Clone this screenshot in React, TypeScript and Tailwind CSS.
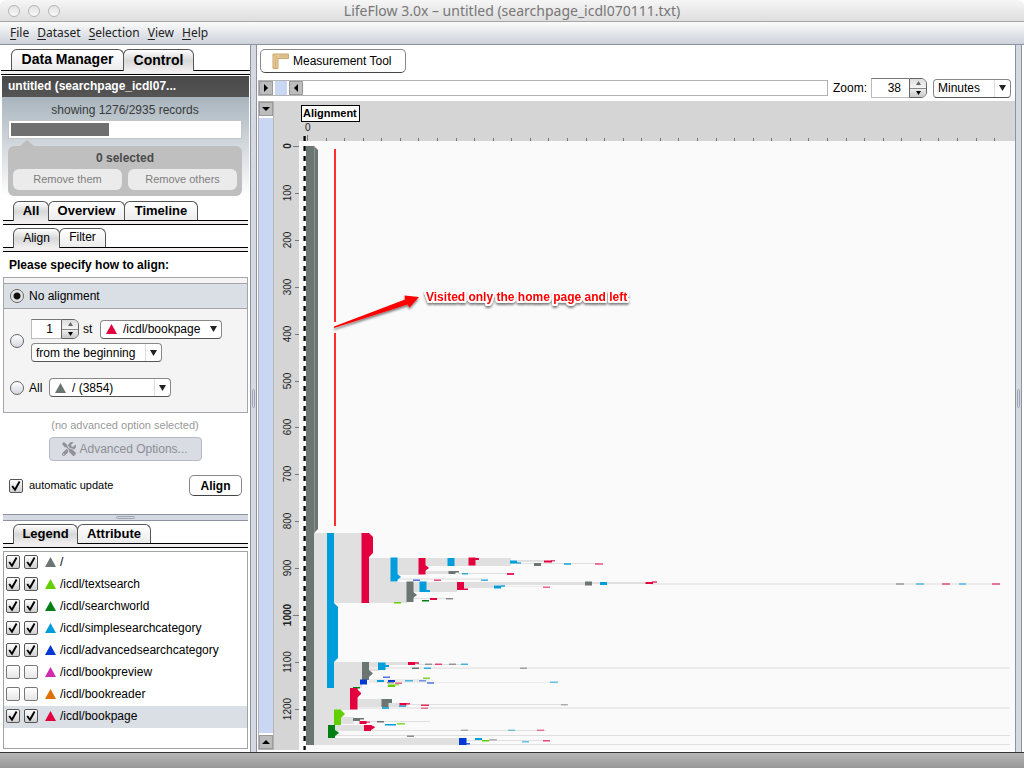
import React, { useState } from "react";
import { FaTools } from "react-icons/fa";

const GRAY = "#6b7572";
const BLUE = "#009ddc";
const RED = "#e2003f";
const NAVY = "#0039d6";
const LIME = "#63cf00";
const GREEN = "#007f14";
const LIGHT = "#e0e0e0";
const FAINT = "#ebebeb";

type Bar = [x: number, y: number, w: number, h: number, color: string, opacity?: number];

/* Light connectors drawn under the event bars. */
const links: Bar[] = [
  [314, 533, 13, 212, LIGHT],
  [334, 533, 28, 70, LIGHT],
  [369, 558, 22, 24, LIGHT],
  [369, 582, 38, 21, LIGHT],
  [397, 558, 22, 17, LIGHT],
  [397, 578, 91, 2, FAINT],
  [425, 558, 86, 8, LIGHT],
  [425, 571, 24, 3, LIGHT],
  [458, 573, 49, 1, LIGHT],
  [475, 560, 35, 6, LIGHT],
  [517, 560, 27, 2, LIGHT],
  [510, 563, 90, 1, LIGHT],
  [413, 582, 44, 10, LIGHT],
  [464, 582, 121, 3, LIGHT],
  [592, 582, 54, 2, LIGHT],
  [464, 585, 30, 3, LIGHT],
  [502, 586, 42, 1, FAINT],
  [650, 583, 350, 2, FAINT],
  [413, 598, 38, 1, LIGHT],
  [334, 662, 28, 26, LIGHT],
  [369, 662, 10, 9, LIGHT],
  [385, 662, 24, 3, LIGHT],
  [415, 664, 52, 1, LIGHT],
  [369, 667, 641, 2, FAINT],
  [369, 679, 60, 3, FAINT],
  [369, 682, 182, 1, FAINT],
  [314, 688, 36, 22, LIGHT],
  [357, 699, 25, 9, LIGHT],
  [388, 703, 12, 4, LIGHT],
  [407, 704, 160, 1, LIGHT],
  [357, 707, 653, 2, FAINT],
  [314, 710, 20, 15, LIGHT],
  [341, 717, 13, 7, LIGHT],
  [360, 721, 70, 1, LIGHT],
  [314, 725, 14, 13, LIGHT],
  [335, 725, 30, 6, LIGHT],
  [371, 730, 175, 1, LIGHT],
  [335, 735, 675, 1, LIGHT],
  [314, 738, 146, 7, LIGHT],
  [466, 740, 80, 1, LIGHT],
  [466, 744, 544, 1, LIGHT],
];

const bars: Bar[] = [
  [306, 146, 8, 599, GRAY],
  [327, 533, 7, 155, BLUE],
  [361.5, 533, 7.5, 70, RED],
  [390.5, 557.5, 7, 24, BLUE],
  [418.5, 558, 7, 16.5, RED],
  [447.5, 558, 7, 8, BLUE],
  [468.5, 557.5, 7, 8, RED],
  [475, 558, 4, 2, RED],
  [448.5, 571, 7, 3, GRAY],
  [455, 571, 4, 1.5, GRAY],
  [462, 573, 6, 1.5, BLUE, 0.8],
  [510, 560.5, 7, 3, BLUE],
  [517, 562, 4, 2, BLUE, 0.6],
  [544, 560.5, 8, 2, RED],
  [551, 560, 4, 1.5, RED, 0.7],
  [534, 563, 7, 3, GRAY],
  [564, 563, 7, 2, BLUE, 0.7],
  [595, 563, 8, 2, RED, 0.5],
  [507, 573, 7, 2, RED, 0.85],
  [413, 579.5, 7, 1.5, NAVY, 0.7],
  [434, 579.5, 7, 1.5, RED, 0.7],
  [481, 579.5, 7, 1.5, BLUE, 0.75],
  [406.5, 581.5, 7, 20.5, GRAY],
  [419.5, 581.5, 7, 10.5, BLUE],
  [426, 590, 4, 2, BLUE],
  [457, 582, 7, 8, RED],
  [464, 588.5, 4, 1.5, RED],
  [585, 581.5, 7, 4, GRAY],
  [600, 582, 7, 3, BLUE],
  [645.5, 582, 7.5, 2, RED],
  [652, 581, 5, 2, RED, 0.6],
  [494, 585.5, 7, 3, BLUE],
  [501, 585, 4, 2, BLUE, 0.7],
  [543, 586.5, 7, 1.5, RED, 0.6],
  [394, 602, 7, 1.5, LIME],
  [422, 600, 7, 1.5, GREEN],
  [430, 598, 7, 2, RED],
  [446, 598, 7, 1.5, GRAY, 0.8],
  [896, 583, 8, 2, GRAY, 0.5],
  [916, 583, 8, 2, BLUE, 0.5],
  [942, 583, 8, 2, RED, 0.5],
  [959, 583, 7, 2, BLUE, 0.5],
  [992, 583, 8, 2, RED, 0.5],
  [362, 662, 7, 18, GRAY],
  [378, 662.5, 7.5, 7.5, BLUE],
  [385, 665, 4, 2, BLUE],
  [408, 662, 7, 3, RED],
  [415, 662, 4, 2, RED, 0.7],
  [425, 663.5, 7, 1.5, GRAY, 0.7],
  [435, 663.5, 7, 1.5, RED, 0.7],
  [449, 663.5, 7, 1.5, GRAY, 0.7],
  [461, 663.5, 7, 1.5, BLUE, 0.7],
  [412, 667.5, 7, 1.5, GRAY],
  [424, 667.5, 7, 1.5, BLUE, 0.8],
  [520, 667.5, 7, 1.5, GRAY, 0.6],
  [383, 676.5, 7, 1.5, NAVY, 0.7],
  [423, 677.5, 7, 1.5, LIME, 0.8],
  [360, 679.5, 7, 5, NAVY],
  [377, 680, 7, 2, BLUE],
  [388, 680, 7, 2, NAVY],
  [387, 682, 7, 1.5, GRAY, 0.7],
  [395, 682.5, 7, 1.5, RED, 0.6],
  [405, 680, 8, 1.5, BLUE, 0.7],
  [419, 680, 7, 1.5, NAVY, 0.5],
  [427, 682, 7, 2, NAVY, 0.5],
  [550, 681.5, 8, 1.5, BLUE, 0.6],
  [388, 684.5, 7, 2.5, LIME],
  [395, 684, 4, 1.5, LIME, 0.6],
  [353, 687, 7, 1.5, GREEN],
  [350, 688, 7.5, 21.5, RED],
  [381.5, 699, 7, 8, GRAY],
  [388, 699, 4, 4, GRAY],
  [399.5, 703, 7, 2.5, RED],
  [406, 703, 4, 1.5, RED, 0.8],
  [399, 705.5, 7, 1.5, BLUE, 0.8],
  [421, 704.5, 8, 1.5, RED, 0.8],
  [421, 707.5, 7, 1.5, RED, 0.5],
  [382, 707, 7, 2, BLUE, 0.8],
  [561, 704, 7, 1.5, GRAY, 0.5],
  [334, 709.5, 7, 15.5, LIME],
  [353, 718, 7, 3, GRAY],
  [359, 718, 5, 1.5, GRAY],
  [359.5, 721, 7, 3, RED],
  [366, 721.5, 4, 1.5, RED, 0.6],
  [377, 721, 7, 1.5, GRAY],
  [385, 724, 11, 1.5, BLUE],
  [397, 723, 8, 1.5, LIME, 0.8],
  [328, 725, 7, 13, GREEN],
  [364, 725, 7, 6, RED],
  [407, 735.5, 7, 1.5, GRAY, 0.8],
  [461, 729.5, 7, 1.5, GRAY, 0.5],
  [508, 729.5, 7, 1.5, BLUE, 0.5],
  [537, 729.5, 7, 1.5, RED, 0.5],
  [459, 738, 7.5, 7, NAVY],
  [466, 743, 4, 1.5, NAVY, 0.8],
  [475, 738, 7, 2, BLUE],
  [482, 740, 7, 1.5, LIME],
  [489, 739, 8, 1.5, GRAY, 0.5],
  [522, 741, 7, 1.5, BLUE, 0.6],
  [543, 740, 7, 1.5, RED, 0.7],
];

/* Chamfered tails: sequences that end at a bar. */
const tails: Bar[] = [
  [314, 146, 4, 387, GRAY],
  [369, 533, 4, 24, RED],
  [334, 603, 4, 59, BLUE],
  [397, 574, 4, 6, BLUE],
  [425, 565, 4, 6, RED],
  [413, 592, 4, 6, GRAY],
  [369, 670, 4, 7, GRAY],
  [357, 689, 4, 9, RED],
  [341, 710, 4, 8, LIME],
  [335, 730, 4, 6, GREEN],
  [371, 725, 4, 5, RED],
];

function tailPoints([x, y, w, h]: Bar) {
  const c = Math.min(4, h / 2);
  return `${x},${y} ${x + w - 1},${y + c - 1} ${x + w},${y + c} ${x + w},${y + h - c} ${x},${y + h}`;
}

function Triangle({ color }: { color: string }) {
  return (
    <svg width="11" height="10" viewBox="0 0 11 10" className="shrink-0" aria-hidden="true">
      <path d="M5.5 0 L11 10 H0 Z" fill={color} />
    </svg>
  );
}

type TabsProps = { items: string[]; selected: number; size: "lg" | "md" | "sm"; widths: string[] };

function Tabs({ items, selected, size, widths }: TabsProps) {
  const [active, setActive] = useState(selected);
  const rowHeight = { lg: "h-[21px]", md: "h-[19px]", sm: "h-[19px]" }[size];
  const text = { lg: "text-sm font-bold", md: "text-[13px] font-bold", sm: "text-xs" }[size];
  return (
    <div role="tablist" className="flex flex-col">
      <div className={`${rowHeight} flex pl-[10px]`}>
        {items.map((t, i) => (
          <button
            key={t}
            role="tab"
            aria-selected={i === active}
            onClick={() => setActive(i)}
            className={`${text} ${widths[i]} ${i ? "-ml-px" : ""} rounded-t-md border border-b-0 border-[#555] pb-0.5 leading-none ${
              i === active
                ? "relative z-10 -mb-px bg-linear-to-b from-white via-[#d8d8d8] to-[#f0eeee]"
                : "bg-linear-to-b from-white to-[#ececec]"
            }`}
          >
            {t}
          </button>
        ))}
      </div>
      <div className="h-[5px] border-y border-black bg-[#f0eeee]" />
    </div>
  );
}

function Check({ label, initial, id }: { label: string; initial: boolean; id?: string }) {
  return (
    <span className="grid size-[14px] shrink-0">
      <input
        id={id}
        type="checkbox"
        aria-label={label}
        defaultChecked={initial}
        className="peer col-start-1 row-start-1 size-[14px] appearance-none rounded-[2px] border border-[#777] bg-linear-to-b from-white to-[#e6e6e6] checked:border-[#555] checked:to-[#cfcfcf]"
      />
      <svg viewBox="0 0 14 14" className="pointer-events-none invisible col-start-1 row-start-1 size-[14px] peer-checked:visible" aria-hidden="true">
        <path d="M3.2 7 L6 10.8 L10.6 2.5" fill="none" stroke="#000" strokeWidth="1.9" />
      </svg>
    </span>
  );
}

function Radio({ label, initial, id }: { label: string; initial?: boolean; id: string }) {
  return (
    <input
      id={id}
      type="radio"
      name="alignment"
      aria-label={label}
      defaultChecked={initial}
      className="size-[14px] shrink-0 appearance-none rounded-full border border-[#666] bg-linear-to-b from-white to-[#d3d7e0] checked:bg-[radial-gradient(circle,#111_0_3px,#e6e6e6_4px)]"
    />
  );
}

function Spinner({ label, value, width }: { label: string; value: number; width: string }) {
  const [n, setN] = useState(value);
  return (
    <span className="flex h-5">
      <input
        type="number"
        aria-label={label}
        value={n}
        onChange={(e) => setN(Number(e.target.value))}
        className={`${width} border border-r-0 border-[#bbb] border-t-[#777] bg-white pr-2 text-right text-xs [appearance:textfield] [&::-webkit-inner-spin-button]:appearance-none`}
      />
      <span className="flex w-[18px] flex-col overflow-hidden rounded-r-md border border-[#666]">
        <button aria-label={`Increase ${label}`} onClick={() => setN(n + 1)} className="flex flex-1 items-center justify-center border-b border-[#888] bg-linear-to-b from-[#ddd] to-[#f5f5f5]">
          <svg width="5" height="4" viewBox="0 0 5 4"><path d="M2.5 0 L5 4 H0 Z" fill="#666" /></svg>
        </button>
        <button aria-label={`Decrease ${label}`} onClick={() => setN(n - 1)} className="flex flex-1 items-center justify-center bg-linear-to-b from-[#eee] to-[#c8c8c8]">
          <svg width="5" height="4" viewBox="0 0 5 4"><path d="M0 0 H5 L2.5 4 Z" fill="#000" /></svg>
        </button>
      </span>
    </span>
  );
}

type DropProps = { label: string; options: string[]; width: string; color?: string; divider?: boolean };

function Drop({ label, options, width, color, divider = true }: DropProps) {
  return (
    <span className={`${width} relative flex h-[19px] items-center rounded-[4px] border border-[#888] border-b-[#555] bg-white`}>
      {color && (
        <span className="pointer-events-none absolute left-[5px]">
          <Triangle color={color} />
        </span>
      )}
      <select aria-label={label} className={`h-full w-full appearance-none bg-transparent text-xs leading-4 outline-none ${color ? "pl-[22px]" : "pl-1"}`}>
        {options.map((o) => (
          <option key={o}>{o}</option>
        ))}
      </select>
      <span className={`pointer-events-none absolute inset-y-0 right-0 flex w-4 items-center justify-center ${divider ? "border-l border-[#ddd]" : ""}`}>
        <svg width="7" height="6" viewBox="0 0 7 6"><path d="M0 0 H7 L3.5 6 Z" fill="#222" /></svg>
      </span>
    </span>
  );
}

function ScrollButton({ label, path }: { label: string; path: string }) {
  return (
    <button aria-label={label} className="flex size-[14px] shrink-0 items-center justify-center border border-[#9a9a9a] bg-[#bcbcbc]">
      <svg width="8" height="8" viewBox="0 0 8 8"><path d={path} fill="#000" /></svg>
    </button>
  );
}

function VerticalDivider() {
  return (
    <div className="flex w-[7px] shrink-0 items-center justify-center border-x border-[#8d91a0] bg-[#d5d9e1]">
      <span className="h-[19px] w-[3px] rounded-full border border-[#9fa4b4]" />
    </div>
  );
}

const legend: { name: string; color: string; on: boolean; current?: boolean }[] = [
  { name: "/", color: GRAY, on: true },
  { name: "/icdl/textsearch", color: LIME, on: true },
  { name: "/icdl/searchworld", color: GREEN, on: true },
  { name: "/icdl/simplesearchcategory", color: BLUE, on: true },
  { name: "/icdl/advancedsearchcategory", color: NAVY, on: true },
  { name: "/icdl/bookpreview", color: "#d02ab0", on: false },
  { name: "/icdl/bookreader", color: "#e07000", on: false },
  { name: "/icdl/bookpage", color: RED, on: true, current: true },
];

function Sidebar() {
  return (
    <aside className="flex w-[250px] shrink-0 flex-col bg-white pt-1 pb-[3px]">
      <div className="pl-px">
        <Tabs items={["Data Manager", "Control"]} selected={1} size="lg" widths={["w-[113px]", "w-[71px]"]} />
      </div>
      <section className="mt-px mr-px ml-0.5">
        <h2 className="h-[21px] bg-linear-to-b from-[#484848] to-[#555] pl-1.5 text-xs leading-[21px] font-bold text-white">untitled (searchpage_icdl07...</h2>
        <div className="bg-linear-to-b from-[#a9b5be] to-white pr-[7px] pl-1.5">
          <p className="h-[23px] pt-px text-center text-xs leading-6 text-[#3a3a3a]">showing 1276/2935 records</p>
          <div className="h-[19px] border border-[#c4c4c4] bg-white p-0.5">
            <div className="h-full w-[43%] bg-[#6f6f6f]" />
          </div>
          <svg width="14" height="7" viewBox="0 0 14 7" className="ml-3 block" aria-hidden="true"><path d="M7 1 L14 7 H0 Z" fill="#bdbdbd" /></svg>
          <div className="h-[50px] rounded-md bg-[#bfbfbf] px-[5px]">
            <p className="h-[23px] text-center text-xs leading-6 font-bold text-[#4a4a4a]">0 selected</p>
            <div className="flex gap-1.5">
              <button className="h-[21px] flex-1 rounded-md bg-[#ebebeb] text-[11px] text-[#808080]">Remove them</button>
              <button className="h-[21px] flex-1 rounded-md bg-[#ebebeb] text-[11px] text-[#808080]">Remove others</button>
            </div>
          </div>
        </div>
      </section>

      <div className="mt-[5px] mr-0.5 ml-[3px] flex flex-col gap-[3px]">
        <Tabs items={["All", "Overview", "Timeline"]} selected={0} size="md" widths={["w-[36px]", "w-[77px]", "w-[74px]"]} />
        <Tabs items={["Align", "Filter"]} selected={0} size="sm" widths={["w-[47px]", "w-[47px]"]} />
      </div>

      <h3 className="h-[25px] pl-[9px] text-xs leading-[26px] font-bold">Please specify how to align:</h3>
      <fieldset className="mr-0.5 ml-[3px] border border-[#a3a5ab] bg-[#f4f4f4] pt-[5px] pb-[15px]">
        <div className="flex h-[26px] items-center gap-[5px] border-y border-[#a3a5ab] bg-[#dadee5] pl-1.5">
          <Radio id="align-none" label="No alignment" initial />
          <label htmlFor="align-none" className="text-xs">No alignment</label>
        </div>
        <div className="flex items-center gap-[7px] pt-[10px] pl-1.5">
          <Radio id="align-nth" label="Align by occurrence" />
          <div className="flex flex-col gap-1">
            <div className="flex items-center">
              <Spinner label="Occurrence" value={1} width="w-[30px]" />
              <span className="w-[21px] pl-1 text-xs">st</span>
              <Drop label="Event" options={["/icdl/bookpage"]} width="w-[122px]" color={RED} divider={false} />
            </div>
            <Drop label="Direction" options={["from the beginning", "from the end"]} width="w-[131px]" />
          </div>
        </div>
        <div className="flex items-center gap-[5px] pt-4 pl-1.5">
          <Radio id="align-all" label="All" />
          <label htmlFor="align-all" className="w-[15px] text-xs">All</label>
          <Drop label="Event for all" options={["/ (3854)"]} width="w-[122px]" color={GRAY} />
        </div>
      </fieldset>
      <p className="h-6 text-center text-[11px] leading-6 text-[#999]">(no advanced option selected)</p>
      <button disabled className="flex h-6 w-[153px] items-center gap-1 self-center rounded-[4px] border border-[#b3b9c6] bg-[#d9dce3] pl-3 text-xs text-[#8c8e93]">
        <FaTools className="size-[14px] text-[#909296]" />
        Advanced Options...
      </button>
      <div className="mt-[14px] flex items-center gap-1.5 pr-2 pl-[9px]">
        <Check id="auto-update" label="automatic update" initial />
        <label htmlFor="auto-update" className="flex-1 text-[11px]">automatic update</label>
        <button className="h-[21px] w-[53px] rounded-[5px] border border-[#888] border-b-[#444] bg-white text-xs leading-none font-bold">Align</button>
      </div>

      <div className="mt-[18px] mr-0.5 ml-[3px] flex h-[7px] items-center justify-center border-y border-[#8d91a0] bg-[#d5d9e1]">
        <span className="h-[3px] w-[19px] rounded-full border border-[#9fa4b4]" />
      </div>
      <div className="mt-[3px] mr-0.5 ml-[3px]">
        <Tabs items={["Legend", "Attribute"]} selected={0} size="md" widths={["w-[65px]", "w-[74px]"]} />
      </div>
      <ul className="mt-[3px] mr-0.5 ml-[3px] flex-1 border border-[#a0a2a6] bg-white">
        {legend.map((l) => (
          <li key={l.name} className={`flex h-[22px] items-center pb-0.5 pl-0.5 ${l.current ? "bg-[#dadee5]" : ""}`}>
            <Check label={`Show ${l.name}`} initial={l.on} />
            <span className="w-1" />
            <Check label={`Include ${l.name}`} initial={l.on} />
            <span className="flex items-center gap-1 pl-[7px] text-xs">
              <Triangle color={l.color} />
              {l.name}
            </span>
          </li>
        ))}
      </ul>
    </aside>
  );
}

function Chart() {
  const ticks = Array.from({ length: 37 }, (_, i) => i + 1);
  const records = Array.from({ length: 13 }, (_, i) => i * 100);
  return (
    <svg className="h-full min-h-[649px] w-0 flex-1 font-['Liberation_Sans',sans-serif]" role="img" aria-label="LifeFlow of page visits">
      <defs>
        <filter id="soft" x="-10%" y="-40%" width="120%" height="200%">
          <feDropShadow dx="0" dy="2" stdDeviation="1" floodColor="#000" floodOpacity="0.5" />
        </filter>
      </defs>
      <rect width="100%" height="100%" fill="#fafafa" />
      <rect width="100%" height="40" fill="#d5d5d5" />
      <rect width="25" height="100%" fill="#d5d5d5" />
      <g transform="translate(-274 -101)">
        {ticks.map((i) => (
          <rect key={i} x={Math.round(307 + i * 18.57)} y="138" width="1" height="3" fill="#777" />
        ))}
        <rect x="307" y="135" width="1" height="6" fill="#777" />
        {records.map((r) => {
          const y = Math.round(146 + r * 0.469);
          const major = r % 1000 === 0;
          return (
            <g key={r}>
              <rect x={major ? 293 : 295} y={y} width={major ? 6 : 4} height="1" fill="#777" />
              <text transform={`translate(291 ${y}) rotate(-90)`} textAnchor="middle" fontSize="10" fontWeight={major ? 700 : 400} fill="#222">
                {r}
              </text>
            </g>
          );
        })}
        {links.map(([x, y, w, h, c], i) => (
          <rect key={i} x={x} y={y} width={w} height={h} fill={c} />
        ))}
        {bars.map(([x, y, w, h, c, o], i) => (
          <rect key={i} x={x} y={y} width={w} height={h} fill={c} opacity={o ?? 1} />
        ))}
        {tails.map((t, i) => (
          <polygon key={i} points={tailPoints(t)} fill={t[4]} />
        ))}
        <path d="M314.5 147 V533" stroke="#8b9491" />
        <path d="M304.6 136 V751" stroke="#000" strokeWidth="2.3" strokeDasharray="5 5" />
        <rect x="301.5" y="105.5" width="58" height="16" fill="#fff" stroke="#000" />
        <text x="303" y="117" fontSize="11" fontWeight="700">Alignment</text>
        <text x="305" y="131" fontSize="10" fill="#222">0</text>
        <path d="M335 149 V322 M335 333 V526" stroke="#ff2d2d" strokeWidth="2" />
        <path d="M334 328 L334 326.5 L405 299.5 L404.5 295.5 L419 297 L409.5 307.5 L407.5 304.5 Z" fill="#f00" filter="url(#soft)" />
        <text x="426" y="301" fontSize="12" fontWeight="700" fill="#f00" stroke="#fff" strokeWidth="4" strokeLinejoin="round" paintOrder="stroke" filter="url(#soft)">
          Visited only the home page and left
        </text>
      </g>
    </svg>
  );
}

function Workspace() {
  return (
    <main className="flex min-w-0 flex-1 flex-col bg-white pt-1">
      <button className="ml-[3px] flex h-6 w-[146px] shrink-0 items-center gap-1 rounded-[5px] border border-[#888] border-b-[#444] bg-white pl-[11px] text-xs">
        <svg width="17" height="16" viewBox="0 0 17 16" aria-hidden="true">
          <path d="M1 1 H16.5 V5.5 H6 V15.5 H1 Z" fill="#e6c894" stroke="#c9a770" />
          <path d="M1 1 L6 5.5 M3.5 15 V5 M8 3 H16" stroke="#d2b078" fill="none" />
        </svg>
        Measurement Tool
      </button>
      <div className="mt-[5px] flex h-5 items-center pr-1 pl-px">
        <div className="flex h-4 flex-1 items-center border border-[#b4b4b4] bg-white">
          <ScrollButton label="Shrink range start" path="M2 0 L6 4 L2 8 Z" />
          <span className="mx-0.5 h-full w-3 bg-[#c9d7f2]" />
          <ScrollButton label="Shrink range end" path="M6 0 L2 4 L6 8 Z" />
        </div>
        <span className="w-[43px] pl-[5px] text-xs">Zoom:</span>
        <Spinner label="Zoom" value={38} width="w-[38px]" />
        <span className="w-1.5" />
        <Drop label="Time unit" options={["Minutes", "Hours", "Days"]} width="w-[78px]" />
      </div>
      <div className="mt-[3px] mb-0.5 ml-px flex flex-1">
        <div className="flex w-4 shrink-0 flex-col items-center border border-[#b4b4b4] bg-white">
          <ScrollButton label="Lower range start" path="M0 2 H8 L4 6 Z" />
          <span className="my-0.5 w-full flex-1 bg-[#c9d7f2]" />
          <ScrollButton label="Raise range end" path="M0 6 H8 L4 2 Z" />
        </div>
        <Chart />
      </div>
    </main>
  );
}

export default function App() {
  const menus = ["File", "Dataset", "Selection", "View", "Help"];
  return (
    <div className="flex min-h-screen flex-col bg-white font-['Liberation_Sans',Arial,sans-serif] text-black">
      <header className="flex h-[22px] items-center rounded-t-md border-b border-[#a5a5a5] bg-linear-to-b from-[#f6f6f6] to-[#dedede] font-['Noto_Sans',sans-serif]">
        <div className="flex w-[68px] gap-2 pl-2">
          {["Close", "Minimize", "Maximize"].map((b) => (
            <button key={b} aria-label={b} className="size-3 rounded-full border border-[#b5b5b5] bg-linear-to-b from-[#e4e4e4] to-[#f8f8f8]" />
          ))}
        </div>
        <h1 className="flex-1 pr-[68px] text-center text-sm text-[#777]">LifeFlow 3.0x – untitled (searchpage_icdl070111.txt)</h1>
      </header>
      <nav className="flex h-[23px] items-center gap-2 border-b border-[#8f94a3] bg-linear-to-b from-[#fbfbfb] to-[#cdd2da] pl-[10px] font-['Noto_Sans',sans-serif] text-xs text-[#222]">
        {menus.map((m) => (
          <button key={m}>
            <span className="underline underline-offset-2">{m[0]}</span>
            {m.slice(1)}
          </button>
        ))}
      </nav>
      <div className="flex flex-1">
        <Sidebar />
        <VerticalDivider />
        <Workspace />
        <VerticalDivider />
        <div className="w-0.5 bg-white" />
      </div>
      <footer className="h-4 border-t border-[#333] bg-linear-to-b from-[#b8b8b8] to-[#969696]" />
    </div>
  );
}
